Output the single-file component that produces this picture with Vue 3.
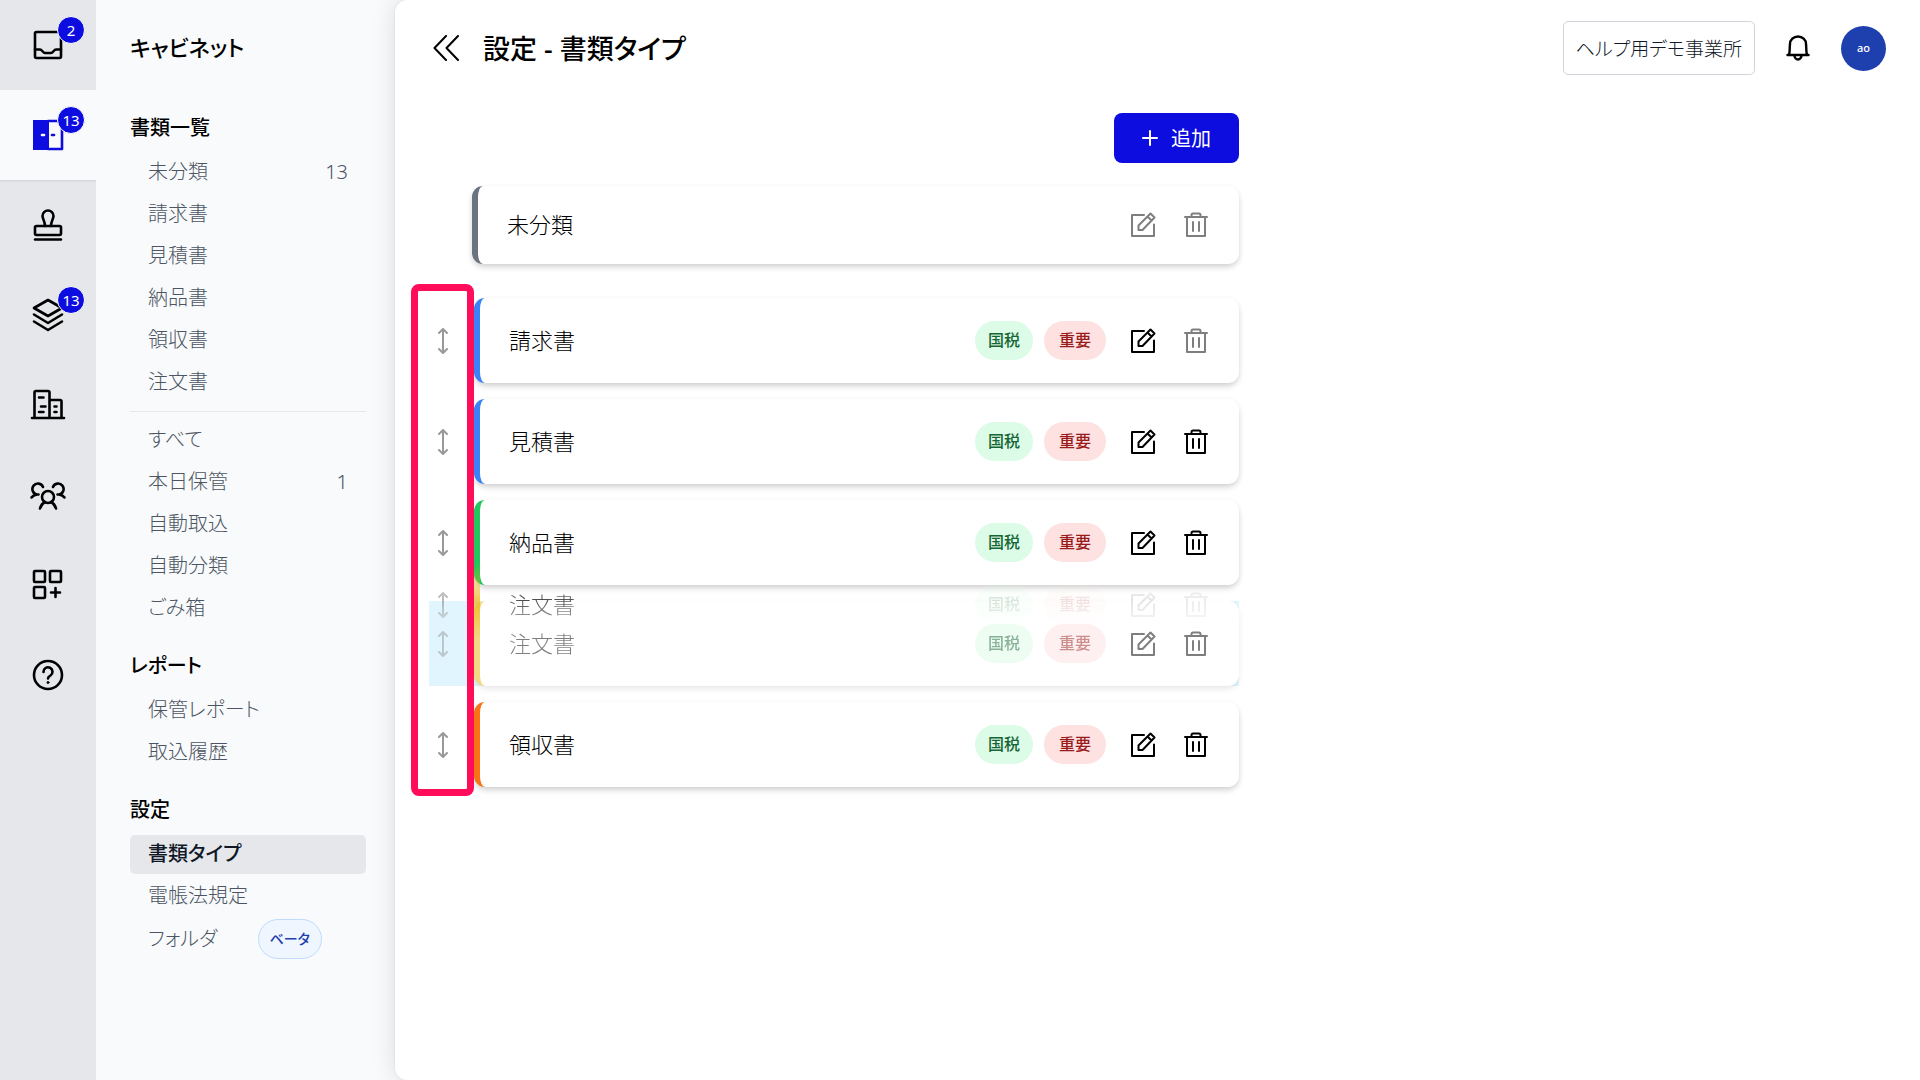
<script setup>
import { ref } from 'vue';

// 左端のメインメニュー
const railItems = [
    { name: 'inbox', label: '受信トレイ', badge: 2 },
    { name: 'cabinet', label: 'キャビネット', badge: 13, active: true },
    { name: 'stamp', label: '承認' },
    { name: 'layers', label: 'スタック', badge: 13 },
    { name: 'building', label: '取引先' },
    { name: 'people', label: 'メンバー' },
    { name: 'apps', label: 'アプリ' },
    { name: 'help', label: 'ヘルプ' },
];

// サイドメニュー
const sections = [
    {
        title: '書類一覧',
        groups: [
            [
                { label: '未分類', count: 13 },
                { label: '請求書' },
                { label: '見積書' },
                { label: '納品書' },
                { label: '領収書' },
                { label: '注文書' },
            ],
            [
                { label: 'すべて' },
                { label: '本日保管', count: 1 },
                { label: '自動取込' },
                { label: '自動分類' },
                { label: 'ごみ箱' },
            ],
        ],
    },
    {
        title: 'レポート',
        groups: [[{ label: '保管レポート' }, { label: '取込履歴' }]],
    },
    {
        title: '設定',
        groups: [
            [
                { label: '書類タイプ', active: true },
                { label: '電帳法規定' },
                { label: 'フォルダ', beta: true },
            ],
        ],
    },
];

const documentTypes = ref([
    { name: '請求書', color: 'blue', canDelete: false },
    { name: '見積書', color: 'blue', canDelete: true },
    { name: '納品書', color: 'green', canDelete: true },
    { name: '注文書', color: 'yellow', canDelete: true, dragging: true },
    { name: '領収書', color: 'orange', canDelete: true },
]);

// ドラッグ中の行は残像も一緒に表示する
const layersOf = (type) => (type.dragging ? ['base', 'ghost'] : ['base']);
</script>

<template>
    <div class="app">
        <nav class="rail">
            <a v-for="item in railItems" :key="item.name" href="#" class="rail-item" :class="{ active: item.active }" :aria-label="item.label">
                <span class="rail-icon">
                    <svg v-if="item.name === 'inbox'" viewBox="0 0 36 36">
                        <rect x="5" y="5" width="26" height="26" rx="1.5" />
                        <path d="M5 22.500h5c2 0 3 3.500 5 3.500h6c2 0 3-3.500 5-3.500h5" />
                    </svg>
                    <svg v-else-if="item.name === 'cabinet'" viewBox="0 0 36 36">
                        <path class="fill" d="M3 3h16v30H3z" />
                        <path d="M18 4h14v28H18" />
                        <path class="knob" d="M12 18h2" />
                        <path d="M22 18h2" />
                    </svg>
                    <svg v-else-if="item.name === 'stamp'" viewBox="0 1 36 36">
                        <rect x="5" y="20" width="26" height="9" rx="1.500" />
                        <path d="M5 33.500h26M15 20c0-5-2.500-7-2.500-10a5.500 5.500 0 0 1 11 0c0 3-2.500 5-2.500 10" />
                    </svg>
                    <svg v-else-if="item.name === 'layers'" viewBox="0 1 36 36">
                        <path d="M18 4L32 12L18 20L4 12ZM4 18.500L18 27L32 18.500M4 25.500L18 34L32 25.500" />
                    </svg>
                    <svg v-else-if="item.name === 'building'" viewBox="0 1 36 36">
                        <path d="M2 32h32M4.500 32V6.500a1.500 1.500 0 0 1 1.500-1.500h12a1.500 1.500 0 0 1 1.500 1.500V32M20 14h10a1.500 1.500 0 0 1 1.500 1.500V32M9 11.500h4.500M11 20.500h4.500M9 26h4.500M24.500 20.500h2M24.500 26h2" />
                    </svg>
                    <svg v-else-if="item.name === 'people'" viewBox="0 0 36 36">
                        <circle cx="18" cy="20" r="6" />
                        <path d="M10 31.500c1-3.500 3-5.500 5-6.500M26 31.500c-1-3.500-3-5.500-5-6.500M13 10A5.500 5.500 0 1 0 7 17.500c-2.500.500-4.500 1.500-5.500 3M23 10A5.500 5.500 0 1 1 29 17.500c2.500.500 4.500 1.500 5.500 3M7 17.500h1.500M29 17.500h-1.500" />
                    </svg>
                    <svg v-else-if="item.name === 'apps'" viewBox="0 1 36 36">
                        <rect x="4" y="5" width="11" height="11" rx="1" />
                        <rect x="20" y="5" width="11" height="11" rx="1" />
                        <rect x="4" y="21" width="11" height="11" rx="1" />
                        <path d="M25.500 22v9M21 26.500h9" />
                    </svg>
                    <svg v-else viewBox="0 0 36 36">
                        <circle cx="18" cy="18" r="14" />
                        <path d="M13.500 15a4.500 4.500 0 1 1 7 3.500c-1.500 1-2.500 1.500-2.500 3" />
                        <circle class="fill dot" cx="18" cy="25.500" r="1" />
                    </svg>
                    <span v-if="item.badge" class="rail-badge">{{ item.badge }}</span>
                </span>
            </a>
        </nav>

        <aside class="sidebar">
            <h2 class="sidebar-title">キャビネット</h2>
            <section v-for="section in sections" :key="section.title" class="section">
                <h3 class="section-title">{{ section.title }}</h3>
                <ul v-for="(group, index) in section.groups" :key="index" class="menu">
                    <li v-for="item in group" :key="item.label">
                        <a href="#" class="menu-link" :class="{ active: item.active }">
                            <span>{{ item.label }}</span>
                            <span v-if="item.count" class="menu-count">{{ item.count }}</span>
                            <span v-if="item.beta" class="beta">ベータ</span>
                        </a>
                    </li>
                </ul>
            </section>
        </aside>

        <main class="main">
            <header class="header">
                <button class="icon-button" aria-label="メニューを閉じる">
                    <svg class="chevrons" viewBox="0 0 26 26"><path d="M13 1L1.500 13L13 25M25 1L13.500 13L25 25" /></svg>
                </button>
                <h1 class="title">設定 - 書類タイプ</h1>
                <button class="office">ヘルプ用デモ事業所</button>
                <button class="icon-button bell" aria-label="お知らせ">
                    <svg viewBox="0 0 24 26">
                        <path d="M1.500 20h21M3 20C4 17 3.500 13 4 9a8 7.500 0 0 1 16 0c.500 4 0 8 1 11M8.500 20.500a3.500 4 0 0 0 7 0" />
                    </svg>
                </button>
                <button class="avatar">ao</button>
            </header>

            <div class="content">
                <div class="toolbar">
                    <button class="add-button">
                        <svg viewBox="0 0 16 16"><path d="M8 1v14M1 8h14" /></svg>
                        追加
                    </button>
                </div>

                <div class="card fixed gray">
                    <span class="card-name">未分類</span>
                    <button class="icon-button" disabled aria-label="未分類を編集">
                        <svg class="edit" viewBox="0 0 26 26"><path d="M14 3H2v21h22V12.500M8.500 18v-4.500L20.500 1.500L24.500 5.500L12.500 18ZM17.500 4.500l4 4" /></svg>
                    </button>
                    <button class="icon-button" disabled aria-label="未分類を削除">
                        <svg class="trash" viewBox="0 0 24 26"><path d="M1 5h22M3 5v19h18V5M7.500 5V3a1.500 1.500 0 0 1 1.500-1.500h6a1.500 1.500 0 0 1 1.500 1.500V5M9 10v9M15 10v9" /></svg>
                    </button>
                </div>

                <div class="list">
                    <div v-for="type in documentTypes" :key="type.name" class="slot" :class="{ dragging: type.dragging }">
                        <div v-for="layer in layersOf(type)" :key="layer" class="row" :class="layer">
                            <span class="handle">
                                <svg viewBox="0 0 10 26"><path d="M5 1.500v23M1 5l4-4l4 4M1 21l4 4l4-4" /></svg>
                            </span>
                            <div class="card" :class="type.color">
                                <span class="card-name">{{ type.name }}</span>
                                <span class="tag tax">国税</span>
                                <span class="tag important">重要</span>
                                <button class="icon-button" :aria-label="type.name + 'を編集'">
                                    <svg class="edit" viewBox="0 0 26 26"><path d="M14 3H2v21h22V12.500M8.500 18v-4.500L20.500 1.500L24.500 5.500L12.500 18ZM17.500 4.500l4 4" /></svg>
                                </button>
                                <button class="icon-button" :disabled="!type.canDelete" :aria-label="type.name + 'を削除'">
                                    <svg class="trash" viewBox="0 0 24 26"><path d="M1 5h22M3 5v19h18V5M7.500 5V3a1.500 1.500 0 0 1 1.500-1.500h6a1.500 1.500 0 0 1 1.500 1.500V5M9 10v9M15 10v9" /></svg>
                                </button>
                            </div>
                        </div>
                    </div>
                    <div class="highlight"></div>
                </div>
            </div>
        </main>
    </div>
</template>

<style>
body {
    margin: 0;
    background-color: #f9fafb;
}
</style>

<style scoped>
.app {
    display: flex;
    min-height: 100vh;
    font-family: "Noto Sans", "Noto Sans CJK JP", sans-serif;
    font-size: 20px;
    font-weight: 300;
    font-feature-settings: "palt";
    color: #000;
    overflow: hidden;
}

h1, h2, h3 {
    margin: 0;
    font-weight: 500;
}

ul {
    margin: 0;
    padding: 0;
    list-style: none;
}

button {
    font: inherit;
    font-feature-settings: inherit;
    color: inherit;
    cursor: pointer;
}

a {
    color: inherit;
    text-decoration: none;
}

svg {
    display: block;
    fill: none;
    stroke: currentColor;
    stroke-width: 2;
    stroke-linecap: round;
    stroke-linejoin: round;
}

/* メインメニュー */
.rail {
    flex: none;
    width: 96px;
    background-color: #e5e7eb;
}

.rail-item {
    display: flex;
    height: 90px;
    align-items: center;
    justify-content: center;
}

.rail-item.active {
    color: #0d0de0;
    background-color: #f9fafb;
    box-shadow: 0 1px 2px rgba(0, 0, 0, 0.1);
}

.rail-icon {
    position: relative;
}

.rail-icon svg {
    width: 36px;
    height: 36px;
    stroke-width: 2.6;
}

.rail-icon .fill {
    fill: currentColor;
    stroke: none;
}

.rail-icon .dot {
    stroke: currentColor;
    stroke-width: 1;
}

.rail-icon .knob {
    stroke: #fff;
}

.rail-badge {
    position: absolute;
    top: -11px;
    right: -19px;
    width: 26px;
    height: 26px;
    border: 1px solid #fff;
    border-radius: 50%;
    background-color: #0d0de0;
    color: #fff;
    font-size: 15px;
    font-weight: 400;
    line-height: 26px;
    text-align: center;
}

/* サイドメニュー */
.sidebar {
    flex: none;
    box-sizing: border-box;
    width: 299px;
    padding: 0 29px 0 34px;
    background-color: #f9fafb;
}

.sidebar-title {
    height: 91px;
    font-size: 22px;
    line-height: 95px;
}

.section-title {
    padding: 23px 0 11px;
    font-size: 20px;
    line-height: 28px;
}

.section + .section .section-title {
    padding-top: 24px;
}

.menu + .menu {
    margin-top: 9px;
    padding-top: 9px;
    border-top: 1px solid #e5e7eb;
}

.menu li + li {
    margin-top: 3px;
}

.menu-link {
    display: flex;
    box-sizing: border-box;
    min-height: 39px;
    padding: 0 18px 1px;
    align-items: center;
    border-radius: 5px;
    color: #4b5563;
    line-height: 28px;
}

.menu-link.active {
    background-color: #e5e7eb;
    color: #111827;
    font-weight: 500;
}

.menu-count {
    margin-left: auto;
}

.beta {
    margin-left: auto;
    margin-right: 26px;
    padding: 0 11px;
    border: 1px solid #bfdbfe;
    border-radius: 20px;
    background-color: #eff6ff;
    color: #1e40af;
    font-size: 14px;
    font-weight: 500;
    line-height: 38px;
}

/* メイン */
.main {
    flex: 1;
    border-radius: 12px 0 0 12px;
    background-color: #fff;
    box-shadow: 0 0 24px rgba(0, 0, 0, 0.12), 0 0 2px rgba(0, 0, 0, 0.12);
}

.header {
    display: flex;
    height: 96px;
    padding: 0 34px 0 38px;
    align-items: center;
}

.icon-button {
    flex: none;
    padding: 0;
    border: none;
    background: none;
}

.icon-button:disabled {
    opacity: 0.5;
}

.chevrons {
    width: 26px;
    height: 26px;
}

.title {
    flex: 1;
    margin-left: 24px;
    padding-bottom: 2px;
    font-size: 27px;
}

.office {
    height: 54px;
    padding: 0 12px;
    border: 1px solid #d1d5db;
    border-radius: 5px;
    background-color: #fff;
    color: #111827;
    font-size: 19px;
}

.bell {
    margin: 0 31px;
}

.bell svg {
    width: 24px;
    height: 26px;
    stroke-width: 2.4;
}

.avatar {
    width: 45px;
    height: 45px;
    padding: 0 0 2px;
    border: none;
    border-radius: 50%;
    background-color: #1e40af;
    color: #fff;
    font-size: 11px;
    font-weight: 500;
}

.content {
    max-width: 810px;
    padding: 17px 34px;
}

.toolbar {
    display: flex;
    margin-bottom: 23px;
    justify-content: flex-end;
}

.add-button {
    display: flex;
    height: 50px;
    padding: 0 28px 1px;
    gap: 13px;
    align-items: center;
    border: none;
    border-radius: 8px;
    background-color: #0d0de0;
    color: #fff;
    font-weight: 400;
}

.add-button svg {
    width: 16px;
    height: 16px;
}

.card {
    display: flex;
    flex: 1;
    box-sizing: border-box;
    height: 85px;
    padding: 0 31px 0 29px;
    align-items: center;
    border-left: 6px solid;
    border-radius: 11px;
    background-color: #fff;
    box-shadow: 0 4px 7px -1px rgba(0, 0, 0, 0.12), 0 2px 6px -1px rgba(0, 0, 0, 0.12);
}

.card.fixed {
    height: 78px;
    margin: 0 0 34px 43px;
}

.gray {
    border-color: #6b7280;
}

.blue {
    border-color: #3b82f6;
}

.green {
    border-color: #22c55e;
}

.yellow {
    border-color: #eab308;
}

.orange {
    border-color: #f97316;
}

.card-name {
    flex: 1;
    padding-bottom: 4px;
    font-size: 22px;
}

.tag {
    margin-right: 11px;
    padding: 0 13px;
    border-radius: 20px;
    font-size: 16px;
    font-weight: 500;
    line-height: 39px;
}

.tax {
    background-color: #dcfce7;
    color: #166534;
}

.important {
    margin-right: 24px;
    padding: 0 15px;
    background-color: #fee2e2;
    color: #991b1b;
}

.edit {
    width: 26px;
    height: 26px;
}

.trash {
    width: 24px;
    height: 26px;
    margin-left: 28px;
}

.list {
    position: relative;
    display: grid;
    gap: 16px;
}

.slot {
    position: relative;
}

.dragging {
    background-color: #e1f5fe;
}

.row {
    display: flex;
}

/* カードの白地は残して中身だけ薄くする */
.dragging .base .handle,
.dragging .base .card > * {
    opacity: 0.5;
}

.dragging .card {
    border-color: #f4d983;
    box-shadow: 0 4px 7px -1px rgba(0, 0, 0, 0.06), 0 2px 6px -1px rgba(0, 0, 0, 0.06);
}

.handle {
    display: flex;
    width: 45px;
    align-items: center;
    color: #999;
}

.handle svg {
    width: 10px;
    height: 26px;
    margin-left: 9px;
}

/* ドラッグ中の残像 */
.ghost {
    position: absolute;
    top: -39px;
    left: 0;
    width: 100%;
    -webkit-mask-image: linear-gradient(transparent, rgba(0, 0, 0, 0.7) 45%, transparent 92%), linear-gradient(90deg, #000 15%, rgba(0, 0, 0, 0.3) 60%, rgba(0, 0, 0, 0.08));
    mask-image: linear-gradient(transparent, rgba(0, 0, 0, 0.7) 45%, transparent 92%), linear-gradient(90deg, #000 15%, rgba(0, 0, 0, 0.3) 60%, rgba(0, 0, 0, 0.08));
    mask-composite: intersect;
}

.ghost .card {
    border-color: #eab308;
    background-color: transparent;
    box-shadow: none;
}

/* 並べ替えハンドルの強調枠 */
.highlight {
    position: absolute;
    top: -14px;
    bottom: -9px;
    left: -18px;
    box-sizing: border-box;
    width: 63px;
    border: 7px solid #ff0c5b;
    border-radius: 8px;
}
</style>
